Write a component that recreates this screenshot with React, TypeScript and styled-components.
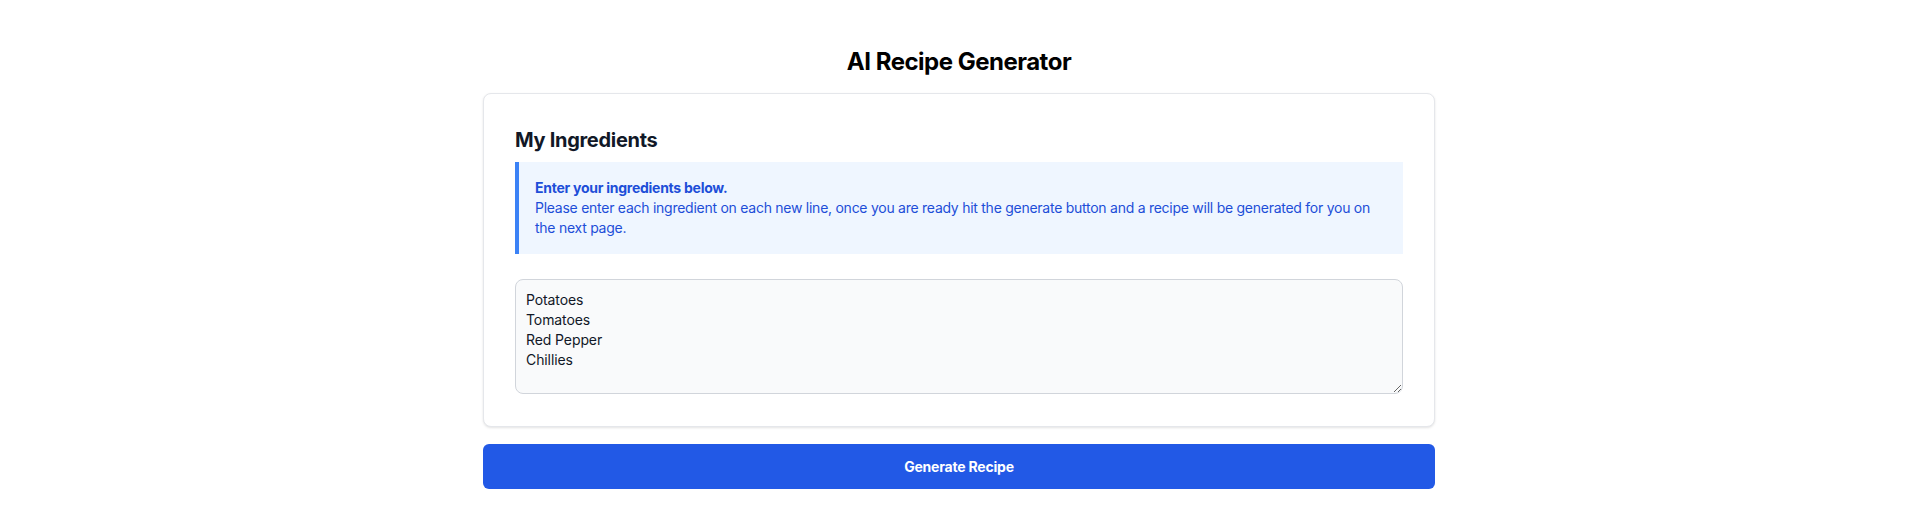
import styled, { createGlobalStyle } from "styled-components"

const GlobalStyle = createGlobalStyle`
    body {
        margin: 0;
        background: #fff;
        font-family: Inter, "Noto Sans", sans-serif;
        color: #111827;
    }
    * {
        box-sizing: border-box;
    }
`

const Page = styled.main`
    width: 952px;
    margin: 0 auto;
    padding-top: 46px;
`

const Title = styled.h1`
    margin: 0 0 15px;
    font-size: 24px;
    line-height: 32px;
    font-weight: 700;
    letter-spacing: -0.5px;
    text-align: center;
    color: #000;
`

const Card = styled.section`
    background: #fff;
    border: 1px solid #e5e7eb;
    border-radius: 8px;
    box-shadow: 0 1px 3px rgba(0, 0, 0, 0.08), 0 1px 2px rgba(0, 0, 0, 0.04);
    padding: 32px 31px;
`

const CardTitle = styled.h2`
    margin: 0 0 8px;
    font-size: 20px;
    line-height: 28px;
    font-weight: 700;
    letter-spacing: -0.3px;
    color: #111827;
`

const Notice = styled.div`
    background: #eff6ff;
    border-left: 4px solid #3b82f6;
    padding: 16px;
    margin-bottom: 25px;
    color: #1d4ed8;
    font-size: 14px;
    line-height: 20px;
    letter-spacing: -0.26px;
`

const NoticeHeading = styled.p`
    margin: 0;
    font-weight: 700;
`

const NoticeText = styled.p`
    margin: 0;
`

const Ingredients = styled.textarea`
    display: block;
    width: 100%;
    height: 115px;
    padding: 10px;
    border: 1px solid #d1d5db;
    border-radius: 8px;
    background: #f9fafb;
    color: #111827;
    font-family: inherit;
    font-size: 14px;
    line-height: 20px;
    letter-spacing: -0.1px;
    outline: none;
`

const GenerateButton = styled.button`
    display: block;
    width: 100%;
    margin-top: 17px;
    height: 45px;
    border: none;
    border-radius: 6px;
    background: #2259e6;
    color: #fff;
    font-family: inherit;
    font-size: 14px;
    font-weight: 700;
    letter-spacing: -0.2px;
    cursor: pointer;
`

export default function App() {
    return (
        <>
            <GlobalStyle />
            <Page>
                <Title>AI Recipe Generator</Title>
                <Card>
                    <CardTitle>My Ingredients</CardTitle>
                    <Notice>
                        <NoticeHeading>Enter your ingredients below.</NoticeHeading>
                        <NoticeText>
                            Please enter each ingredient on each new line, once you are ready hit the generate button and a recipe will be generated for you on the next page.
                        </NoticeText>
                    </Notice>
                    <Ingredients defaultValue={"Potatoes\nTomatoes\nRed Pepper\nChillies"} />
                </Card>
                <GenerateButton>Generate Recipe</GenerateButton>
            </Page>
        </>
    )
}
